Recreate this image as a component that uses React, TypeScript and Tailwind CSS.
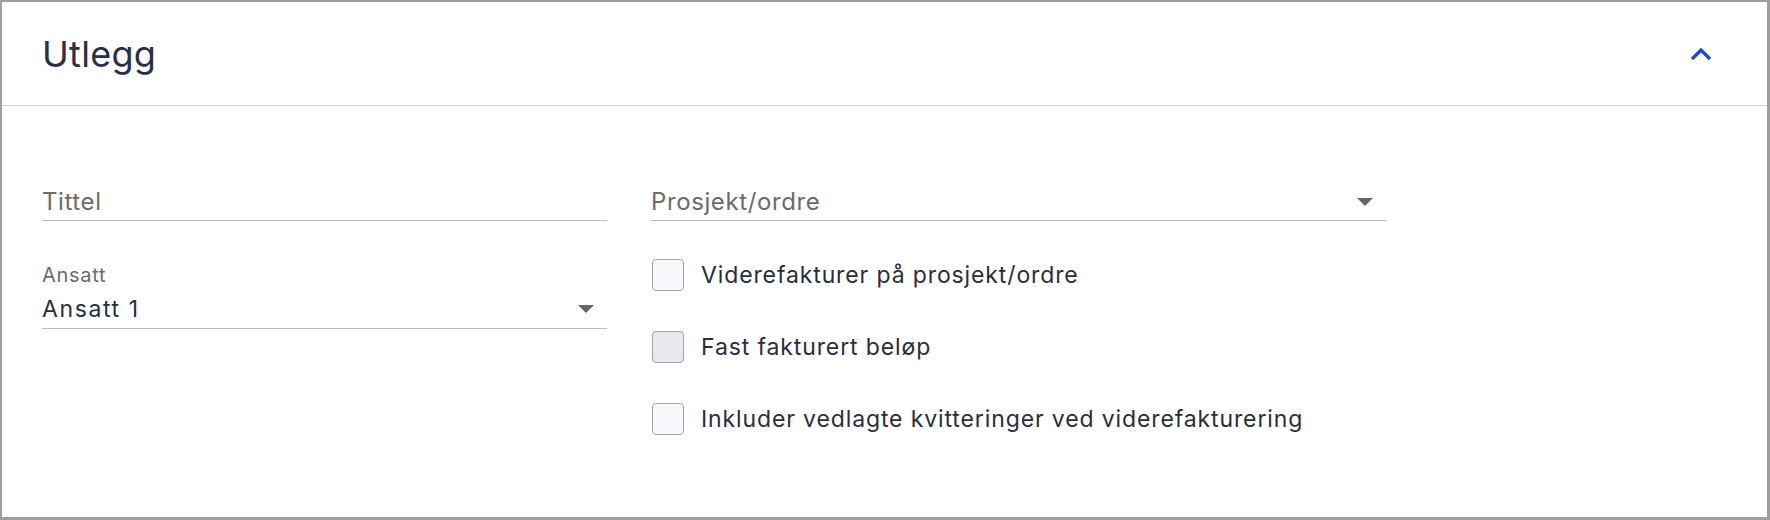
import React from "react";

function Caret({ className }: { className?: string }) {
  return (
    <svg width="16" height="8" viewBox="0 0 16 8" className={className}>
      <polygon points="0,0 16,0 8,8" fill="#666666" />
    </svg>
  );
}

function Checkbox({ label, disabled }: { label: string; disabled?: boolean }) {
  return (
    <label className="flex items-center h-[32px]">
      <span
        className={
          disabled
            ? "w-[32px] h-[32px] rounded-[4px] border border-[#a3a3a3] bg-[#e8e9ee]"
            : "w-[32px] h-[32px] rounded-[4px] border border-[#a3a3a3] bg-[#f7f8fc]"
        }
      />
      <span className="ml-[17px] text-[23px] leading-[28px] tracking-[0.88px] text-[#262e42]">{label}</span>
    </label>
  );
}

export default function App() {
  return (
    <div
      className="w-[1770px] h-[520px] bg-white border-t-2 border-l-2 border-r-[3px] border-b-[3px] border-[#9e9e9e] flex flex-col"
      style={{ fontFamily: "Inter, 'Noto Sans', sans-serif" }}
    >
      <div className="h-[104px] shrink-0 border-b border-[#d2d2d2] flex items-center justify-between pl-[40px] pr-[55px]">
        <h1 className="text-[36px] leading-[44px] tracking-[0.3px] text-[#27304a] font-normal">Utlegg</h1>
        <svg width="22" height="15" viewBox="0 0 22 15">
          <polyline points="2,13 11,4 20,13" fill="none" stroke="#1a44e0" strokeWidth="3.2" />
        </svg>
      </div>
      <div className="flex pl-[40px] pt-[81px] gap-[44px]">
        <div className="w-[565px] flex flex-col">
          <div className="border-b border-[#bdbdbd] pb-[3px]">
            <span className="text-[24px] leading-[30px] tracking-[0.6px] text-[#6b6b6b]">Tittel</span>
          </div>
          <div className="mt-[42px] border-b border-[#bdbdbd] pb-[5px]">
            <div className="text-[20px] leading-[24px] tracking-[0.7px] text-[#6b6b6b]">Ansatt</div>
            <div className="mt-[8px] flex items-center justify-between pr-[13px]">
              <span className="text-[23px] leading-[28px] tracking-[1.6px] text-[#262e42]">Ansatt 1</span>
              <Caret />
            </div>
          </div>
        </div>
        <div className="w-[735px] flex flex-col">
          <div className="border-b border-[#bdbdbd] pb-[3px] flex items-center justify-between pr-[13px]">
            <span className="text-[24px] leading-[30px] tracking-[0.6px] text-[#6b6b6b]">Prosjekt/ordre</span>
            <Caret />
          </div>
          <div className="mt-[38px] flex flex-col gap-[40px] pl-[1px]">
            <Checkbox label="Viderefakturer på prosjekt/ordre" />
            <Checkbox label="Fast fakturert beløp" disabled />
            <Checkbox label="Inkluder vedlagte kvitteringer ved viderefakturering" />
          </div>
        </div>
      </div>
    </div>
  );
}
